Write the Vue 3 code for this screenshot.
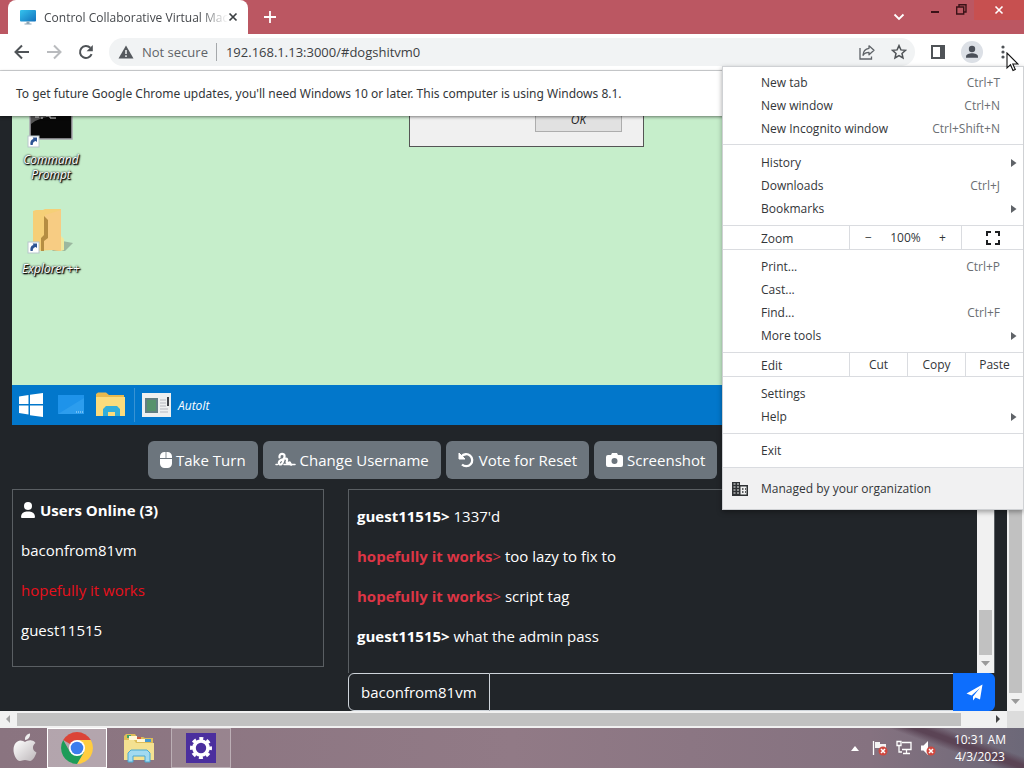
<script setup>
import { ref } from 'vue'

const address = ref('192.168.1.13:3000/#dogshitvm0')
const message = ref('')

const newItems = [
  { label: 'New tab', keys: 'Ctrl+T' },
  { label: 'New window', keys: 'Ctrl+N' },
  { label: 'New Incognito window', keys: 'Ctrl+Shift+N' },
]
const groups = {
  library: [
    { label: 'History', sub: true },
    { label: 'Downloads', keys: 'Ctrl+J' },
    { label: 'Bookmarks', sub: true },
  ],
  page: [
    { label: 'Print...', keys: 'Ctrl+P' },
    { label: 'Cast...' },
    { label: 'Find...', keys: 'Ctrl+F' },
    { label: 'More tools', sub: true },
  ],
  settings: [{ label: 'Settings' }, { label: 'Help', sub: true }],
  exit: [{ label: 'Exit' }],
}
const menu = [
  { kind: 'items', tight: true, items: newItems },
  { kind: 'items', loose: true, items: groups.library },
  { kind: 'zoom' },
  { kind: 'items', items: groups.page },
  { kind: 'edit' },
  { kind: 'items', items: groups.settings },
  { kind: 'items', items: groups.exit },
]
const users = [
  { name: 'baconfrom81vm' },
  { name: 'hopefully it works', admin: true },
  { name: 'guest11515' },
]
const messages = [
  { from: 'guest11515', text: "1337'd" },
  { from: 'hopefully it works', text: 'too lazy to fix to', admin: true },
  { from: 'hopefully it works', text: 'script tag', admin: true },
  { from: 'guest11515', text: 'what the admin pass' },
]
</script>

<template>
  <div class="screen">
    <header class="titlebar">
      <div class="tab">
        <svg class="favicon" width="16" height="16" viewBox="0 0 16 16">
          <defs>
            <linearGradient id="mon" x1="0" y1="0" x2="1" y2="1">
              <stop offset="0" stop-color="#35c3ee" />
              <stop offset="1" stop-color="#1272bd" />
            </linearGradient>
          </defs>
          <rect x="0" y="1" width="16" height="11.5" rx="1" fill="url(#mon)" />
          <path d="M6.500 12.500h3v2h2v1h-7v-1h2z" fill="#8ea5b5" />
        </svg>
        <span class="tab-title">Control Collaborative Virtual Mac</span>
        <button class="plain" aria-label="Close tab">
          <svg width="10" height="10" viewBox="0 0 10 10"><path d="M1.500 1.500l7 7M8.500 1.500l-7 7" stroke="#3c4043" stroke-width="1.700" /></svg>
        </button>
      </div>
      <button class="plain new-tab" aria-label="New tab">
        <svg width="14" height="14" viewBox="0 0 14 14"><path d="M7 1v12M1 7h12" stroke="#fff" stroke-width="1.800" /></svg>
      </button>
      <div class="window-buttons">
        <button class="plain search" aria-label="Search tabs">
          <svg width="12" height="8" viewBox="0 0 12 8"><path d="M1.500 1.500L6 6l4.500-4.500" fill="none" stroke="#fff" stroke-width="1.800" /></svg>
        </button>
        <button class="plain win" aria-label="Minimize">
          <svg width="10" height="10" viewBox="0 0 10 10"><path d="M1 7h8" stroke="#3a1217" stroke-width="2" /></svg>
        </button>
        <button class="plain win" aria-label="Restore">
          <svg width="11" height="11" viewBox="0 0 11 11"><path d="M.7 3h7v7h-7zM3 3V.8h7V8H8" fill="none" stroke="#3a1217" stroke-width="1.400" /></svg>
        </button>
        <button class="plain close" aria-label="Close">
          <svg width="10" height="10" viewBox="0 0 10 10"><path d="M1.500 1.500l7 7M8.500 1.500l-7 7" stroke="#fff" stroke-width="1.600" /></svg>
        </button>
      </div>
    </header>

    <nav class="toolbar">
      <button class="plain" aria-label="Back">
        <svg width="16" height="16" viewBox="0 0 16 16"><path d="M15 8H2M8 1.500L1.500 8 8 14.500" fill="none" stroke="#4f5357" stroke-width="2" /></svg>
      </button>
      <button class="plain" aria-label="Forward">
        <svg width="16" height="16" viewBox="0 0 16 16"><path d="M1 8h13M8 1.500L14.500 8 8 14.500" fill="none" stroke="#b9bbbe" stroke-width="2" /></svg>
      </button>
      <button class="plain" aria-label="Reload">
        <svg width="16" height="16" viewBox="0 0 16 16"><path d="M13.600 10.200A6 6 0 1 1 12.300 3.800" fill="none" stroke="#4f5357" stroke-width="2" /><path d="M14.800 1v6.200H8.600z" fill="#4f5357" /></svg>
      </button>
      <div class="omnibox">
        <svg width="16" height="14" viewBox="0 0 16 14"><path d="M8 .5L15.500 13.500H.5z" fill="#55595e" /><path d="M8 5v4M8 10.300v1.700" stroke="#f1f3f4" stroke-width="1.500" /></svg>
        <span class="insecure">Not secure</span>
        <input v-model="address" class="address" aria-label="Address" />
        <button class="plain" aria-label="Share">
          <svg width="16" height="16" viewBox="0 0 16 16" fill="none" stroke="#5f6368" stroke-width="1.300"><path d="M1 4v11h11.500v-2.500" /><path d="M10 1.800L15 6.300l-5 4.500V8.300c-3 0-4.800 1-6 3 .2-4 2.500-6.500 6-7z" stroke-linejoin="round" /></svg>
        </button>
        <button class="plain" aria-label="Bookmark this tab">
          <svg width="16" height="16" viewBox="0 0 16 16"><path d="M8 1.600l1.900 4.300 4.600.4-3.500 3.100 1 4.600-4-2.400-4 2.400 1-4.600L1.500 6.300l4.600-.4z" fill="none" stroke="#4f5357" stroke-width="1.500" /></svg>
        </button>
      </div>
      <button class="plain" aria-label="Side panel">
        <svg width="14" height="14" viewBox="0 0 14 14"><rect x="1" y="1" width="12" height="12" fill="#fff" stroke="#4f5357" stroke-width="2" /><path d="M9 1h4v12H9z" fill="#4f5357" /></svg>
      </button>
      <button class="plain" aria-label="Profile">
        <svg width="22" height="22" viewBox="0 0 22 22"><circle cx="11" cy="11" r="11" fill="#dce0e6" /><circle cx="11" cy="8" r="3.200" fill="#4a4f58" /><path d="M5 16.800v-1.300c0-2 3.500-3.200 6-3.200s6 1.200 6 3.200v1.300z" fill="#4a4f58" /></svg>
      </button>
      <button class="plain more" aria-label="Customize and control">
        <svg width="4" height="14" viewBox="0 0 4 14" fill="#4f5357"><circle cx="2" cy="2" r="1.600" /><circle cx="2" cy="7" r="1.600" /><circle cx="2" cy="12" r="1.600" /></svg>
      </button>
    </nav>

    <p class="infobar">To get future Google Chrome updates, you'll need Windows 10 or later. This computer is using Windows 8.1.</p>

    <div class="viewport">
      <main class="page">
        <section class="vm">
          <div class="desktop">
            <div class="shortcuts">
              <div class="shortcut">
                <svg width="48" height="32" viewBox="0 0 48 32">
                  <rect x="3" y="-10" width="42" height="33" fill="#080808" stroke="#a8a8ae" stroke-width="1.500" />
                  <path d="M4 8Q14 0 30 0H4z" fill="#555" />
                  <path d="M8 1h4M14 2h2M19 0h4v2h6" stroke="#eee" fill="none" />
                  <rect x="1" y="20" width="11" height="11" fill="#fff" stroke="#b8c6cc" />
                  <path d="M3.500 29c-.5-4 1-5.500 3-6l-.8-1.500H10V26l-1.300-1c-2 .5-3 1.500-3 4z" fill="#2d5494" />
                </svg>
                <span>Command<br />Prompt</span>
              </div>
              <div class="shortcut explorer">
                <svg width="48" height="50" viewBox="0 0 48 50">
                  <path d="M35 34l11 2-8 8H25z" fill="#6f8173" opacity=".5" />
                  <path d="M6 4l3-1h7l2-1h16v42l-8-1-20 1z" fill="#f5cf77" />
                  <path d="M18 8l16-5v41l-18-2V31l2-2z" fill="#f7cc83" />
                  <path d="M17 9l4 4v18l-4 3v10h-3V31l3-3z" fill="#b58d43" />
                  <path d="M34 29l3 3v11l-3 1z" fill="#efe89c" />
                  <rect x="1" y="35" width="11" height="11" fill="#fff" stroke="#b8c6cc" />
                  <path d="M3.500 44c-.5-4 1-5.500 3-6l-.8-1.500H10V41l-1.300-1c-2 .5-3 1.500-3 4z" fill="#2d5494" />
                </svg>
                <span>Explorer++</span>
              </div>
            </div>
            <div class="dialog"><button class="ok">OK</button></div>
          </div>
          <div class="vm-taskbar">
            <svg width="26" height="26" viewBox="0 0 26 26" fill="#fff"><path d="M1 4.500l9.500-1.500v9H1zM12 2.700L25 1v11H12zM1 13.500h9.500v9L1 21zM12 13.500h13V25l-13-1.800z" /></svg>
            <svg width="28" height="20" viewBox="0 0 28 20"><rect x="2" width="26" height="19" fill="#1e93ea" /><path d="M2 19L28 3v16z" fill="#36a3f0" opacity=".6" /><path d="M20 17h7" stroke="#b9e2fb" stroke-dasharray="1 1" /></svg>
            <svg width="30" height="26" viewBox="0 0 30 26"><path d="M0 2l2-1.500h8L13 3h15v4H0z" fill="#e8b94e" /><path d="M0 5h29v19H0z" fill="#fbdc7d" /><path d="M7 24v-7l3-3h11l3 3v7h-5v-4h-7v4z" fill="#32aedb" /></svg>
            <button class="vm-task">
              <svg width="30" height="24" viewBox="0 0 30 24"><rect width="29" height="24" fill="#eef0f0" /><rect x="3" y="5" width="13" height="15" fill="#627f82" /><rect x="5" y="7" width="9" height="11" fill="#56936c" /><path d="M18 7h6M18 10h6M18 13h6M18 16h8M18 19h8" stroke="#b7b9c0" /><path d="M25 4h2v9h-2z" fill="#414449" /></svg>
              AutoIt
            </button>
          </div>
        </section>

        <div class="actions">
          <button class="btn">
            <svg width="12" height="16" viewBox="0 0 12 16" fill="#fff"><path d="M5.600 0v6H0V4.500A4.500 4.500 0 0 1 4.500 0zM6.400 0v6H12V4.500A4.500 4.500 0 0 0 7.500 0zM0 7h12v4.500A4.500 4.500 0 0 1 7.500 16h-3A4.500 4.500 0 0 1 0 11.500z" /></svg>
            Take Turn
          </button>
          <button class="btn">
            <svg width="21" height="16" viewBox="0 0 21 16" fill="none" stroke="#fff" stroke-linecap="round" stroke-linejoin="round"><path d="M4.500 5.500V4.500A2.700 2.700 0 0 1 7.200 1.800c2.400 0 2.800 1.800 2 4L7.800 10c-.6 1.800-1.800 2.800-3 2.400-1.600-.6-1.200-3 .8-4.200 2-1.200 4-1.700 5.600-1.700 2.400 0-.8 4.300 1 4.600 1.200.1 1.800-1 2.600-.6.8.5 0 2 1.500 2.200" stroke-width="2.200" /><path d="M1 12.500h1.500M9 12.500h11" stroke-width="1.500" /></svg>
            Change Username
          </button>
          <button class="btn">
            <svg width="17" height="16" viewBox="0 0 17 16"><path d="M3.500 4.500A6 6 0 1 1 4 12.500" fill="none" stroke="#fff" stroke-width="2.300" /><path d="M1 1v6h6z" fill="#fff" stroke="#fff" stroke-linejoin="round" /></svg>
            Vote for Reset
          </button>
          <button class="btn">
            <svg width="17" height="16" viewBox="0 0 17 16"><path fill-rule="evenodd" d="M2 3h3l1-2h5l1 2h3a2 2 0 0 1 2 2v8a2 2 0 0 1-2 2H2a2 2 0 0 1-2-2V5a2 2 0 0 1 2-2zm6.500 3a3 3 0 1 0 0 6 3 3 0 0 0 0-6z" fill="#fff" /></svg>
            Screenshot
          </button>
        </div>

        <div class="panels">
          <section class="users">
            <h2>
              <svg width="14" height="16" viewBox="0 0 14 16" fill="#fff"><circle cx="7" cy="4" r="4" /><path d="M0 15a5.500 5.500 0 0 1 5.500-5.500h3A5.500 5.500 0 0 1 14 15a1 1 0 0 1-1 1H1a1 1 0 0 1-1-1z" /></svg>
              Users Online (3)
            </h2>
            <p v-for="u in users" :key="u.name" :class="{ admin: u.admin }">{{ u.name }}</p>
          </section>
          <section class="chat">
            <div class="log">
              <div class="messages">
                <p v-for="(m, i) in messages" :key="i">
                  <span v-if="m.admin" class="from-admin"><b>{{ m.from }}</b>&gt;</span>
                  <b v-else>{{ m.from }}&gt;</b>
                  {{ m.text }}
                </p>
              </div>
              <div class="log-scroll">
                <i class="thumb"></i>
                <svg width="9" height="5" viewBox="0 0 9 5"><path d="M0 0h9L4.500 5z" fill="#9a9a9a" /></svg>
              </div>
            </div>
            <form class="composer" @submit.prevent>
              <label for="message">baconfrom81vm</label>
              <input id="message" v-model="message" />
              <button aria-label="Send">
                <svg width="17" height="17" viewBox="0 0 17 17" fill="#fff"><path d="M16.500.5L14 15.500l-4.500-2L7 16.500v-4L14 4 5.500 11.500.5 9.500z" /></svg>
              </button>
            </form>
          </section>
        </div>
      </main>
      <div class="vscroll">
        <i class="thumb"></i>
        <svg width="9" height="5" viewBox="0 0 9 5"><path d="M0 0h9L4.500 5z" fill="#9a9a9a" /></svg>
      </div>
      <div class="hscroll">
        <svg width="17" height="9" viewBox="0 0 17 9"><path d="M10 0v8L6 4z" fill="#a2a2a2" /></svg>
        <span class="track"><i class="thumb"></i></span>
        <svg width="17" height="9" viewBox="0 0 17 9"><path d="M6 0v8l4-4z" fill="#444" /></svg>
      </div>
      <div class="corner"></div>
    </div>

    <footer class="taskbar">
      <button class="plain task start" aria-label="Start">
        <svg width="24" height="30" viewBox="0 0 24 30">
          <defs><linearGradient id="apple" x1="0" y1="0" x2="1" y2="1"><stop offset="0" stop-color="#fff" /><stop offset="1" stop-color="#bdb7ba" /></linearGradient></defs>
          <path d="M12 9c2-1 4-2 6.500-1.500 2 .3 3 1.200 4 2.500-3.500 2.500-3.500 7.500 1 9.500-1 3-3.500 8.500-6.500 8.500-2 0-2.500-1-5-1s-3 1-5 1C3.500 28 .5 21.500.5 17c0-6 3.500-9.500 7-9.500 2 0 3.200 1 4.500 1.500z" fill="url(#apple)" />
          <path d="M12 7c-.5-3.500 2-6 5-6.500.5 3.500-2 6.500-5 6.500z" fill="#eee" />
        </svg>
      </button>
      <button class="plain task active" aria-label="Google Chrome">
        <svg width="32" height="32" viewBox="0 0 32 32">
          <path d="M16 16L2.200 8A16 16 0 0 1 29.800 8z" fill="#db4437" />
          <path d="M16 16V8h13.800A16 16 0 0 1 16 32l7-12z" fill="#ffcd40" />
          <path d="M16 16l7 4-7 12A16 16 0 0 1 2.200 8L9 20z" fill="#1d9c58" />
          <circle cx="16" cy="16" r="8" fill="#fff" /><circle cx="16" cy="16" r="6.300" fill="#3b7ded" />
        </svg>
      </button>
      <button class="plain task" aria-label="File Explorer">
        <svg width="32" height="30" viewBox="0 0 32 30">
          <path d="M1 3l2-2h9l2 3h6l2 1h8v5H1z" fill="#ddbd59" />
          <path d="M4 2h4v3H4z" fill="#3fa66b" /><path d="M12 4h6v3h-6z" fill="#cf5e43" /><path d="M20 6h8v3h-8z" fill="#4598d0" />
          <path d="M6 3h8v4H6zM14 6h8v3h-8z" fill="#fff8d8" />
          <path d="M1 7h10l2 3h18v17H1z" fill="#f4e191" />
          <path d="M5 29v-9l3-3h16l3 3v9h-5v-6H10v6z" fill="#a1daf1" stroke="#4ba9d1" />
        </svg>
      </button>
      <button class="plain task open" aria-label="Settings">
        <svg width="30" height="30" viewBox="0 0 30 30">
          <rect width="30" height="30" fill="#4b2f9e" />
          <circle cx="15" cy="15" r="7" fill="none" stroke="#fff" stroke-width="3.600" />
          <circle cx="15" cy="15" r="9.500" fill="none" stroke="#fff" stroke-width="3" stroke-dasharray="4 3.461" stroke-dashoffset="2" />
        </svg>
      </button>
      <div class="tray">
        <svg class="expand" width="8" height="5" viewBox="0 0 8 5"><path d="M0 5l4-5 4 5z" fill="#fff" /></svg>
        <svg width="16" height="16" viewBox="0 0 16 16"><path d="M1.500 1v14" stroke="#fff" stroke-width="1.300" /><path d="M3 2h5v2h6v6H8V8H3z" fill="#f4f4f4" /><circle cx="11" cy="11" r="4.500" fill="#d0483f" /><path d="M9 9l4 4M13 9l-4 4" stroke="#fff" stroke-width="1.500" /></svg>
        <svg width="16" height="16" viewBox="0 0 16 16" fill="none" stroke="#fff" stroke-width="1.300"><path d="M6 2.500h9v7H6M10.500 10v3M7 13.500h7M1 1.500h4v4H1zM3 6v6h3" /></svg>
        <svg width="16" height="16" viewBox="0 0 16 16"><path d="M1 5.500h2.500L8 1v14l-4.500-4.500H1z" fill="#fff" /><circle cx="11" cy="11" r="4.500" fill="#d0483f" /><path d="M9 9l4 4M13 9l-4 4" stroke="#fff" stroke-width="1.500" /></svg>
      </div>
      <div class="clock">10:31 AM<br />4/3/2023</div>
    </footer>

    <div class="menu" role="menu">
      <template v-for="(g, i) in menu" :key="i">
        <div v-if="g.kind === 'items'" class="group" :class="{ tight: g.tight, loose: g.loose }">
          <button v-for="it in g.items" :key="it.label" class="item" role="menuitem">
            <span>{{ it.label }}</span>
            <kbd v-if="it.keys">{{ it.keys }}</kbd>
            <svg v-if="it.sub" width="6" height="8" viewBox="0 0 6 8"><path d="M0 0l5.500 4L0 8z" fill="#5f6368" /></svg>
          </button>
        </div>
        <div v-else-if="g.kind === 'zoom'" class="row">
          <span class="row-label">Zoom</span>
          <div class="zoom-cell">
            <button aria-label="Zoom out">−</button><span>100%</span><button aria-label="Zoom in">+</button>
          </div>
          <button class="full" aria-label="Full screen">
            <svg width="14" height="14" viewBox="0 0 14 14"><path d="M1 5V1h4M9 1h4v4M13 9v4H9M5 13H1V9" fill="none" stroke="#1d1f21" stroke-width="2" /></svg>
          </button>
        </div>
        <div v-else class="row">
          <span class="row-label">Edit</span>
          <button v-for="e in ['Cut', 'Copy', 'Paste']" :key="e" class="edit-cell">{{ e }}</button>
        </div>
      </template>
      <button class="managed">
        <svg width="16" height="14" viewBox="0 0 16 14"><path d="M0 0h8v3h8v11H0z" fill="#2f3235" /><path d="M1.500 2h2M5 2h2M1.500 5h2M5 5h2M1.500 8h2M5 8h2M1.500 11h2M5 11h2" stroke="#f1f1f1" stroke-width="1.200" /><path d="M8.500 4.500h6v8h-6z" fill="#f1f1f1" /><path d="M10 7h1.500M13 7h1M10 10h1.500M13 10h1" stroke="#2f3235" stroke-width="1.500" /></svg>
        Managed by your organization
      </button>
    </div>

    <svg class="cursor" width="13" height="20" viewBox="0 0 13 20"><path d="M1 1v15l3.500-3.300L7 18.500l2.300-1L6.800 12H12z" fill="#fff" stroke="#111" stroke-width="1.100" /></svg>
  </div>
</template>

<style>
body {
  margin: 0;
}
</style>

<style scoped>
* {
  box-sizing: border-box;
}
.screen {
  position: relative;
  display: flex;
  flex-direction: column;
  height: 100vh;
  overflow: hidden;
  font-family: 'Open Sans', 'Noto Sans', sans-serif;
  font-size: 12px;
  color: #333639;
  background: #fff;
}
button,
input,
kbd {
  font: inherit;
  color: inherit;
}
button {
  padding: 0;
  border: 0;
  background: none;
}
svg {
  display: block;
  flex: none;
}
.plain {
  display: flex;
  align-items: center;
  justify-content: center;
}
.titlebar {
  display: flex;
  flex: none;
  height: 34px;
  padding-left: 8px;
  background: #bb5762;
}
.tab {
  display: flex;
  align-items: center;
  justify-content: space-between;
  width: 240px;
  padding: 0 11px 0 12px;
  border-radius: 8px 8px 0 0;
  background: #fff;
}
.tab-title {
  flex: 1;
  padding-left: 8px;
  white-space: nowrap;
  color: #45484c;
  mask-image: linear-gradient(to right, #000 85%, transparent);
}
.new-tab {
  width: 44px;
}
.window-buttons {
  display: flex;
  align-items: flex-start;
  margin-left: auto;
}
.search {
  width: 46px;
  height: 34px;
}
.win {
  width: 26px;
  height: 19px;
}
.close {
  width: 50px;
  height: 20px;
  background: #c75050;
}
.toolbar {
  display: flex;
  flex: none;
  align-items: center;
  gap: 16px;
  height: 37px;
  padding: 0 19px 0 14px;
  border-bottom: 1px solid #d6d8da;
}
.more {
  margin-left: 2px;
}
.omnibox {
  display: flex;
  flex: 1;
  align-items: center;
  gap: 16px;
  height: 28px;
  margin-left: -1px;
  padding: 0 8px 0 9px;
  border-radius: 14px;
  background: #f1f3f4;
  font-size: 13px;
}
.insecure {
  margin-left: -8px;
  padding-right: 8px;
  border-right: 1px solid #a5a8ab;
  line-height: 18px;
  white-space: nowrap;
  color: #5f6368;
}
.address {
  flex: 1;
  min-width: 0;
  margin-left: -7px;
  padding: 0;
  border: 0;
  outline: 0;
  background: none;
  color: #3c4043;
}
.infobar {
  position: relative;
  z-index: 1;
  flex: none;
  margin: 0;
  padding: 0 16px;
  font-family: 'Noto Sans', 'Open Sans', sans-serif;
  line-height: 45px;
  background: #fff;
  box-shadow: 0 1px 3px rgba(0, 0, 0, 0.5);
}
.viewport {
  display: grid;
  flex: 1;
  grid-template: minmax(0, 1fr) 17px / minmax(0, 1fr) 17px;
  min-height: 0;
}
.page {
  display: flex;
  flex-direction: column;
  overflow: hidden;
  padding: 0 12px;
  background: #212529;
  color: #fff;
  font-size: 15px;
}
.desktop {
  position: relative;
  height: 269px;
  overflow: hidden;
  background: #c6eecb;
}
.shortcuts {
  width: 78px;
}
.shortcut {
  display: flex;
  flex-direction: column;
  align-items: center;
  gap: 4px;
  font-size: 12px;
  line-height: 15px;
  font-style: italic;
  text-align: center;
  text-shadow: 1px 1px 1px #000, 0 0 2px #000, 1px 1px 2px #000;
}
.explorer {
  margin-top: 25px;
}
.dialog {
  position: absolute;
  top: -80px;
  left: 397px;
  display: flex;
  align-items: flex-end;
  justify-content: flex-end;
  width: 235px;
  height: 111px;
  padding: 0 21px 14px;
  border: 1px solid #555;
  background: #f0f0f0;
}
.ok {
  width: 87px;
  height: 26px;
  border: 1px solid #adadad;
  background: #e1e1e1;
  color: #222;
  font-size: 12px;
  font-style: italic;
}
.vm-taskbar {
  display: flex;
  align-items: center;
  gap: 12px;
  height: 40px;
  padding: 0 6px;
  background: #0277cb;
}
.vm-task {
  display: flex;
  align-items: center;
  gap: 6px;
  height: 34px;
  margin-left: -4px;
  padding-left: 7px;
  border-left: 1px solid #3793d4;
  color: #fff;
  font-size: 12px;
  font-style: italic;
}
.actions {
  display: flex;
  gap: 5px;
  padding: 16px 0 10px 136px;
}
.btn {
  display: flex;
  align-items: center;
  gap: 4px;
  height: 38px;
  padding: 0 12px;
  border-radius: 6px;
  background: #6c757d;
  color: #fff;
  white-space: nowrap;
}
.panels {
  display: grid;
  grid-template-columns: 312fr 647fr;
  column-gap: 24px;
  align-items: start;
}
.panels p,
.panels h2 {
  margin: 0 0 16px;
  font-size: 15px;
  line-height: 24px;
}
.users {
  height: 178px;
  padding: 8px 8px 0;
  border: 1px solid #5a5f63;
}
.users h2 {
  display: flex;
  align-items: center;
  gap: 5px;
}
.users .admin {
  color: #e8101c;
}
.log {
  display: flex;
  height: 184px;
  border: 1px solid #5a5f63;
  border-bottom: 0;
}
.messages {
  flex: 1;
  padding: 14px 8px 0;
}
.from-admin {
  color: #dc3545;
}
.log-scroll,
.vscroll {
  display: flex;
  flex-direction: column;
  align-items: center;
  justify-content: flex-end;
  gap: 6px;
  width: 17px;
  padding-bottom: 7px;
  background: #f1f1f1;
}
.log-scroll .thumb {
  width: 13px;
  height: 45px;
  background: #c1c1c1;
}
.composer {
  display: flex;
  height: 38px;
}
.composer label {
  padding: 0 12px;
  border: 1px solid #ced4da;
  border-radius: 6px 0 0 6px;
  line-height: 36px;
}
.composer input {
  flex: 1;
  min-width: 0;
  border: 1px solid #ced4da;
  border-width: 1px 0;
  outline: 0;
  background: #212529;
}
.composer button {
  display: flex;
  align-items: center;
  justify-content: center;
  width: 42px;
  border-radius: 0 6px 6px 0;
  background: #0d6efd;
}
.vscroll .thumb {
  flex: 1;
  width: 13px;
  background: #c1c1c1;
}
.hscroll {
  display: flex;
  align-items: center;
  background: #f1f1f1;
}
.track {
  flex: 1;
}
.track .thumb {
  display: block;
  width: 97%;
  height: 13px;
  background: #c1c1c1;
}
.corner {
  background: #dcdcdc;
}
.taskbar {
  display: flex;
  flex: none;
  align-items: center;
  gap: 2px;
  height: 40px;
  padding-right: 18px;
  background: linear-gradient(20deg, transparent 0 88%, #5b4455 90%, #5b4455 91%, transparent 93%), linear-gradient(to right, #8a7480, #917a86 50%, #857280 85%, #6c6878);
  color: #fff;
}
.task {
  width: 60px;
  height: 40px;
}
.start {
  width: 45px;
  padding-left: 5px;
}
.active {
  border: 1px solid #fff;
  background: rgba(255, 255, 255, 0.35);
}
.open {
  border: 1px solid rgba(255, 255, 255, 0.35);
  background: rgba(255, 255, 255, 0.1);
}
.tray {
  display: flex;
  align-items: center;
  gap: 8px;
  margin-left: auto;
  padding-right: 16px;
}
.expand {
  margin-right: 5px;
}
.clock {
  text-align: center;
  line-height: 17px;
}
.menu {
  position: absolute;
  z-index: 2;
  top: 66px;
  right: 0;
  width: 302px;
  border: 1px solid #cfd1d4;
  background: #fff;
  box-shadow: 0 2px 5px rgba(0, 0, 0, 0.35);
}
.group {
  padding: 5px 0;
  border-bottom: 1px solid #dadce0;
}
.tight {
  padding: 4px 0;
}
.loose {
  padding-top: 6px;
}
.item {
  display: flex;
  align-items: center;
  justify-content: space-between;
  width: 100%;
  height: 23px;
  padding: 0 6px 0 38px;
}
.item kbd {
  padding-right: 17px;
  color: #6b6f73;
}
.row {
  display: flex;
  height: 24px;
  border-bottom: 1px solid #dadce0;
}
.row-label {
  flex: 1;
  padding-left: 38px;
  line-height: 25px;
}
.zoom-cell {
  display: flex;
  align-items: center;
  justify-content: space-between;
  width: 112px;
  padding: 0 15px;
  border-left: 1px solid #dadce0;
}
.full {
  display: flex;
  align-items: center;
  justify-content: center;
  width: 62px;
  border-left: 1px solid #dadce0;
}
.edit-cell {
  width: 58px;
  border-left: 1px solid #dadce0;
}
.managed {
  display: flex;
  align-items: center;
  gap: 13px;
  width: 100%;
  height: 41px;
  padding-left: 9px;
  background: #f1f1f2;
}
.cursor {
  position: absolute;
  z-index: 3;
  top: 52px;
  right: 5px;
}
</style>
